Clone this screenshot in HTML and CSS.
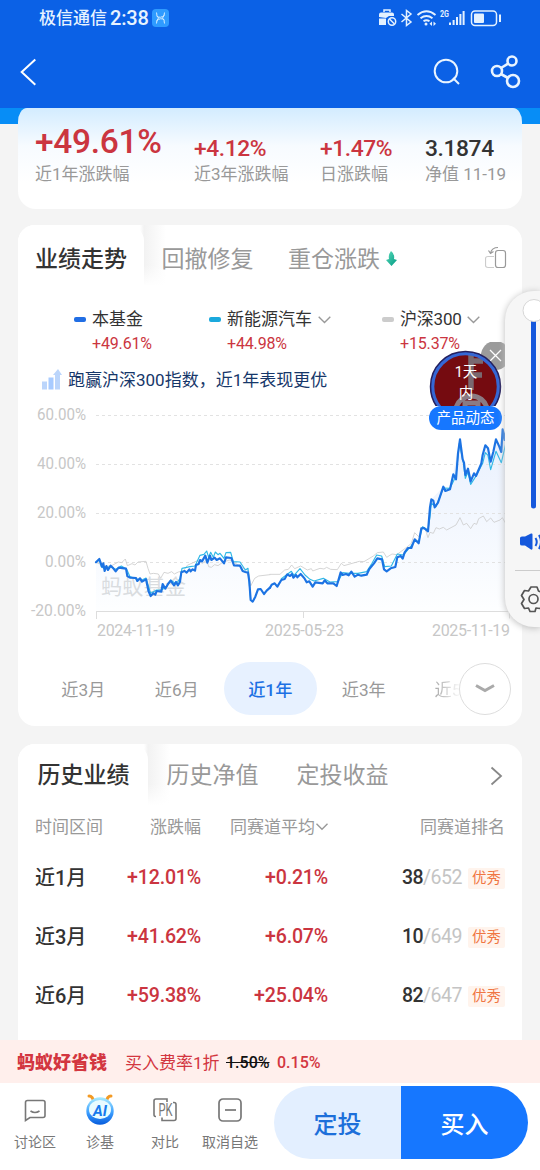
FILE: index.html
```html
<!DOCTYPE html>
<html lang="zh-CN">
<head>
<meta charset="utf-8">
<title>基金详情</title>
<link rel="stylesheet" href="styles.css">
</head>
<body>
<div class="screen">
  <header class="header">
    <div class="status">
      <div class="status-left"><span class="carrier">极信通信</span><span class="clock">2:38</span>
        <svg width="17" height="18" viewBox="0 0 17 18"><rect width="17" height="18" rx="4" fill="#2f9bff"/><path d="M4.5 3.500Q4.500 7 6.500 9Q4.500 11 4.500 14.500M12.500 3.500Q12.500 7 10.500 9Q12.500 11 12.500 14.500M4.500 7Q8.500 10 12.500 6M4.500 12Q8.500 8 12.500 11" fill="none" stroke="#d4edff" stroke-width="1"/></svg>
      </div>
      <svg class="status-icons" width="124" height="20" viewBox="378 8 124 20" fill="none" stroke="#e4f1ff" stroke-width="1.500">
        <path d="M379 17v-2.500q0-2 2-2h11q2 0 2 2V16h-5l-3 2zM379 18.500h7V25h-7z" fill="#e4f1ff" stroke="none"/><path d="M384 12v-2h6v2"/><circle cx="392" cy="21.500" r="3.700"/><path d="M389.500 19l5 5"/>
        <path d="M401.500 14l9.500 8-4.500 3.500v-15L411 14l-9.500 8"/>
        <path d="M417.500 15q9-7.500 18 0M420.500 18.300q6-4.500 12 0M423.500 21.300q3-2 6 0" stroke-width="1.900"/><circle cx="426" cy="24" r="1.500" fill="#e4f1ff" stroke="none"/><path d="M432 21.500l-2.500 2.300 2.500 2.300zM433.500 21.500l2.500 2.300-2.500 2.300z" fill="#e4f1ff" stroke="none"/>
        <text x="440" y="17" class="net" textLength="9" lengthAdjust="spacingAndGlyphs">2G</text>
        <path d="M450 25v-2.500M453.600 25v-5M457 25v-8M460.400 25v-11M463.600 25v-14" stroke-width="2"/>
        <rect x="471.500" y="11" width="25" height="14.500" rx="3.500"/><rect x="474" y="13.500" width="10" height="9.500" rx="1" fill="#e4f1ff" stroke="none"/><path d="M500 14.500v7.500" stroke-width="2"/>
      </svg>
    </div>
    <div class="navbar">
      <svg width="18" height="28" viewBox="20 58 18 28"><path d="M35.300 59.500L21.700 72l13.600 12.700" fill="none" stroke="#fff" stroke-width="2"/></svg>
      <svg width="90" height="36" viewBox="432 54 90 36" fill="none" stroke="#e9f4ff" stroke-width="2"><circle cx="446" cy="71" r="11.300"/><path d="M453 78l6 6"/><g stroke-width="2.600"><circle cx="512" cy="61" r="4.500"/><circle cx="497" cy="71" r="5"/><circle cx="513" cy="81" r="6"/><path d="M501 68l7.500-4.700M501 74l7 4"/></g></svg>
    </div>
  </header>

  <main class="content">
    <section class="summary">
      <div class="metric big"><b>+49.61%</b><span>近1年涨跌幅</span></div>
      <div class="metric"><b>+4.12%</b><span>近3年涨跌幅</span></div>
      <div class="metric"><b>+1.47%</b><span>日涨跌幅</span></div>
      <div class="metric dark"><b>3.1874</b><span>净值 11-19</span></div>
    </section>

    <section class="card trend">
      <div class="tabs">
        <div class="tab active">业绩走势</div><div class="tab">回撤修复</div><div class="tab">重仓涨跌
          <svg width="11" height="16" viewBox="0 0 11 16"><defs><linearGradient id="leaf" x2="1" y2="1"><stop stop-color="#5cdcbb"/><stop offset="1" stop-color="#009982"/></linearGradient></defs><path d="M5 0Q9 3 8 8l3 1-5.500 6L0 9l3-1Q2 4 5 0z" fill="url(#leaf)"/></svg></div>
        <svg class="rotate" width="23" height="24" viewBox="485 246 23 24" fill="none" stroke="#999" stroke-width="1.200"><rect x="495.500" y="250.500" width="10" height="17" rx="2.500"/><path d="M494 256.500h-6q-2.500 0-2.500 2v7q0 2 2.500 2h6" stroke="#ccc"/><path d="M498 247.500q-6 0-7.500 5.500M488.500 250.500l2 3 3-2"/></svg>
      </div>
      <div class="legend">
        <div class="item blue"><i></i><div><span>本基金</span><em>+49.61%</em></div></div>
        <div class="item cyan"><i></i><div><span>新能源汽车<svg width="13" height="8" viewBox="0 0 13 8"><path d="M.7.8l5.800 5.700L12.300.8"/></svg></span><em>+44.98%</em></div></div>
        <div class="item gray"><i></i><div><span><u>沪深300</u><svg width="13" height="8" viewBox="0 0 13 8"><path d="M.7.8l5.800 5.700L12.300.8"/></svg></span><em>+15.37%</em></div></div>
      </div>
      <div class="insight">
        <svg width="20" height="21" viewBox="0 0 20 21" fill="#bbd5fb"><rect y="12.500" width="5" height="8"/><rect x="6.500" y="8.500" width="5" height="12" fill="#a8cbff"/><path d="M13 20.500V6h-2l5-6 4 6h-2v14.500z"/></svg>
        <span>跑赢沪深300指数，近1年表现更优</span>
      </div>
      <svg class="chart" width="504" height="248" viewBox="18 397 504 248">
        <defs><linearGradient id="area" gradientUnits="userSpaceOnUse" x1="0" y1="80" x2="0" y2="634"><stop stop-color="#e2ecfd"/><stop offset="1" stop-color="#fdfeff"/></linearGradient></defs>
        <g transform="translate(20 400) scale(.33333)">
          <path fill="url(#area)" fill-opacity=".8" d="M228 634V487L238 477 254 510 272 497 287 514 318 506 330 533 378 538 392 588 424 575 452 542 480 545 494 513 525 512 540 480 556 467 612 490 634 474 642 496 684 518 698 605 722 567 732 582 794 537 842 522 878 560 950 558 962 517 1040 524 1072 475 1086 478 1100 514 1126 501 1174 444 1196 430 1224 394 1234 298 1270 260 1290 268 1320 118 1336 225 1352 244 1384 190 1396 136 1412 185 1428 118 1438 140 1448 88 1458 95V634z"/>
        </g>
        <text x="101" y="594" class="mark" textLength="85">蚂蚁基金</text>
        <g stroke="#e2e2e2" stroke-dasharray="3 3"><path d="M96 415.500h414M96 464.500h414M96 513.500h414M96 562.500h414M96 611.500h414"/></g>
        <path d="M96.500 619v-7.500H509.500v7M303.500 611v7" fill="none" stroke="#ddd"/>
        <g class="yaxis"><text x="37" y="420" textLength="49" lengthAdjust="spacingAndGlyphs">60.00%</text><text x="37" y="469" textLength="49" lengthAdjust="spacingAndGlyphs">40.00%</text><text x="37" y="518" textLength="49" lengthAdjust="spacingAndGlyphs">20.00%</text><text x="45" y="567" textLength="41" lengthAdjust="spacingAndGlyphs">0.00%</text><text x="31" y="616" textLength="55" lengthAdjust="spacingAndGlyphs">-20.00%</text></g>
        <g class="xaxis"><text x="97" y="636" textLength="78">2024-11-19</text><text x="265" y="636" textLength="79">2025-05-23</text><text x="432" y="636" textLength="78">2025-11-19</text></g>
        <g transform="translate(20 400) scale(.33333)" fill="none" stroke-linejoin="round" stroke-linecap="round">
          <g stroke="#ccc" stroke-width="2.500"><path d="M228 487L255 500 275 497 295 486 305 488 316 477 322 497 336 491 345 495 354 486 378 484 384 505 390 522 400 520 415 522 422 535 432 517 444 520 455 515 463 522 475 516 490 513 502 496 532 482 548 490 560 480 566 500 574 502 584 494 594 497 608 487 628 480 640 486 670 505 686 512 692 558 704 535 716 528 750 524"/>
          <path transform="translate(750 60)" d="M0 463L30 463 44 450 55 448 65 435 74 446 92 438 112 450 124 446 128 453 150 445 162 447 170 442 182 448 202 449 214 430 222 437 268 424 282 425 310 408 322 398 340 396 350 412 366 402 380 404 410 382 424 370 434 338 446 350 456 325 466 328 474 353 480 337 490 340 498 323 508 327 520 322 530 330 558 315 570 293 580 315 590 310 602 326 612 310 620 313 626 296 640 288 650 305 662 294 672 307 690 300 697 293 708 312"/></g>
          <g stroke="#31b9e6" stroke-width="3.500"><path d="M228 487L238 480 244 500 254 506 270 500 287 508 304 498 320 508 330 530 350 537 366 540 378 534 392 580 410 570 424 570 440 560 452 540 468 552 480 536 486 505 510 500 525 498 540 466 552 463 560 453 566 472 572 457 580 472 586 456 594 464 600 460 612 475 618 458 632 457 640 485 660 486 676 510 684 505 692 600"/>
          <path transform="translate(750 60)" d="M34 476L64 454 72 466 90 446 105 465 120 478 132 483 160 475 180 486 204 485 218 458 238 460 264 460 290 455 306 430 320 405 335 408 344 440 364 438 382 402 400 405 424 377 436 360 446 365 458 320 474 330 480 290 484 250 498 260 520 204 540 205 558 168 568 70 580 128 586 175 594 157 602 193 620 165 638 130 646 98 654 106 662 149 678 94 694 128 708 68"/></g>
          <g stroke="#1c73e3" stroke-width="6.500"><path d="M228 487L238 477 246 500 250 490 254 513 259 498 264 510 272 497 280 505 287 514 296 503 318 506 322 528 330 533 348 534 352 543 360 535 366 545 378 538 386 575 392 588 400 580 406 584 410 573 424 575 428 552 436 566 444 552 452 542 462 556 468 546 474 556 480 545 484 517 494 513 500 518 508 508 512 514 518 508 525 512 528 495 536 492 540 480 546 484 556 467 562 488 570 467 574 480 584 473 590 480 600 475 612 490 618 472 634 474 642 496 660 497 668 513 676 516 684 518 688 545 692 600 698 605 706 590 714 568 722 567 732 582 740 572 750 563"/>
          <path transform="translate(750 60)" d="M0 503L5 494 14 490 22 500 34 480 44 477 52 463 60 468 66 462 70 473 78 465 82 472 92 462 104 476 110 487 118 484 128 500 136 487 158 490 164 481 172 490 190 490 200 498 206 478 212 457 218 465 228 462 236 466 244 455 254 470 264 464 274 467 290 464 298 447 312 430 322 415 336 418 342 448 350 454 362 445 376 441 382 412 392 408 398 416 404 397 414 384 424 384 434 358 446 370 454 325 462 324 474 334 480 262 484 238 490 242 494 262 504 248 520 200 526 213 540 208 550 163 558 178 564 100 570 58 578 118 582 128 586 165 594 146 602 184 612 160 618 168 634 130 638 105 646 76 654 85 662 125 670 95 678 58 688 80 694 96 698 28 704 60 708 35"/></g>
        </g>
      </svg>
      <div class="ranges"><span>近3月</span><span>近6月</span><span class="on">近1年</span><span>近3年</span><span class="faded">近5年</span>
        <button class="more"><svg width="20" height="10" viewBox="0 0 20 10"><path d="M1 1.500L10 6.500l9-5" fill="none" stroke="#aaa" stroke-width="3"/></svg></button>
      </div>
      <div class="float">
        <svg width="80" height="64" viewBox="428 342 80 64"><circle cx="495.500" cy="355.500" r="14.500" fill="#9b9b9b"/><path d="M490 350l11 11M501 350l-11 11" stroke="#fff" stroke-width="1.300"/><circle cx="465.500" cy="386.500" r="34.500" fill="#750b10" stroke="#25205e" stroke-width="2.500"/><path d="M471 353v37M471 361h12M471 375h11" fill="none" stroke="#796970" stroke-width="5.500"/><path d="M456 408a16 16 0 0 1 31 0M465 408v-5h13v5" fill="none" stroke="#8b7b84" stroke-width="5"/><circle cx="465.500" cy="386.500" r="32.700" fill="none" stroke="#3567d5" stroke-width="3"/></svg>
        <span class="days">1天<br>内</span><span class="pill">产品动态</span>
      </div>
    </section>

    <section class="card history">
      <div class="tabs"><div class="tab active">历史业绩</div><div class="tab">历史净值</div><div class="tab">定投收益</div>
        <svg class="arrow" width="13" height="20" viewBox="0 0 13 20"><path d="M1.500 1.500l9.500 8.500-9.500 8.500" fill="none" stroke="#888" stroke-width="1.800"/></svg></div>
      <div class="row head"><span>时间区间</span><span>涨跌幅</span><span>同赛道平均<svg width="14" height="8" viewBox="0 0 14 8"><path d="M1.500.800L7 6.300 12.500.800" fill="none" stroke="#999" stroke-width="1.400"/></svg></span><span>同赛道排名</span></div>
      <div class="row"><span>近1月</span><b>+12.01%</b><b>+0.21%</b><span class="rank">38<small>/652</small><i>优秀</i></span></div>
      <div class="row"><span>近3月</span><b>+41.62%</b><b>+6.07%</b><span class="rank">10<small>/649</small><i>优秀</i></span></div>
      <div class="row"><span>近6月</span><b>+59.38%</b><b>+25.04%</b><span class="rank">82<small>/647</small><i>优秀</i></span></div>
    </section>
  </main>

  <footer class="footer">
    <div class="promo"><strong>蚂蚁好省钱</strong><span>买入费率1折</span><del>1.50%</del><b>0.15%</b></div>
    <div class="actions">
      <div class="action a1"><svg width="30" height="32" viewBox="0 0 30 32" fill="none" stroke="#777" stroke-width="1.600"><path d="M5.500 26.500V8.500q0-2 2-2h15.500q2 0 2 2v13q0 2-2 2H10z"/><path d="M10.500 17q4.500 3 9 0"/></svg><span>讨论区</span></div>
      <div class="action a2"><svg width="30" height="32" viewBox="0 0 30 32"><defs><linearGradient id="ai" x2="0" y2="1"><stop stop-color="#a8ecff"/><stop offset=".55" stop-color="#3d9fff"/><stop offset="1" stop-color="#075cdc"/></linearGradient></defs><path d="M4 2q4 0 5 7M26 2q-4 0-5 7" fill="none" stroke="#f39a24" stroke-width="3" stroke-linecap="round"/><circle cx="15" cy="17" r="13.700" fill="url(#ai)"/><ellipse cx="15" cy="15.500" rx="11" ry="9.500" fill="#e8fbff"/><text x="8" y="21.500" class="ai" textLength="14">AI</text></svg><span>诊基</span></div>
      <div class="action a3"><svg width="30" height="32" viewBox="0 0 30 32" fill="none" stroke="#777" stroke-width="1.600"><path d="M6 22.500H5.500q-1.500 0-1.500-2V7q0-2 2-2h11v3M12 23.500v3h12q2 0 2-2V10.500q0-2-2-2h-1"/><text x="8.500" y="22" class="pk" textLength="14" lengthAdjust="spacingAndGlyphs">PK</text></svg><span>对比</span></div>
      <div class="action a4"><svg width="30" height="32" viewBox="0 0 30 32" fill="none" stroke="#777" stroke-width="1.700"><rect x="4" y="5" width="22" height="22" rx="4"/><path d="M10 16h11"/></svg><span>取消自选</span></div>
      <div class="buttons"><button class="plan">定投</button><button class="buy">买入</button></div>
    </div>
  </footer>

  <div class="volume">
    <svg width="35" height="336" viewBox="505 291 35 336" fill="none"><path d="M533.500 315v191" stroke="#1558dc" stroke-width="5" stroke-linecap="round"/><circle cx="534" cy="310.500" r="11" fill="#fff" stroke="#d5d5d5"/><path d="M520 538q0-1.500 2-1.500h3l6-3q1.500-.5 1.500 1v14q0 1.500-1.500 1l-6-4h-3q-2 0-2-1.500z" fill="#1558dc"/><path d="M535.500 538q2.500 4 0 8M539 535q4 7 0 14" stroke="#1558dc" stroke-width="2"/><path d="M515 570.500h25" stroke="#ccc"/><g stroke="#555" stroke-width="1.700" stroke-linejoin="round"><path d="M531 587h6l1.500 4 4 1.500 3 5-2.500 3 1 4-4 4-4-.5-1 3.500h-5l-1.500-3.500-4 .5-3-5 2.500-4-2.500-4 3-5 4 .5z"/><circle cx="533.500" cy="599" r="4.500"/></g></svg>
  </div>
</div>
</body>
</html>
```
FILE: styles.css
```css
* { box-sizing: border-box; }
body { margin: 0; font-family: Roboto, "Noto Sans CJK SC", sans-serif; color: #333; }
svg { display: block; flex: none; }
button { border: 0; padding: 0; font: inherit; }
.screen { position: relative; width: 540px; height: 1170px; overflow: hidden; display: flex; flex-direction: column; background: #f4f4f4; }
.header { height: 108px; flex: none; background: #0b61e6; color: #e7f3ff; }
.status { height: 36px; padding: 0 38px 0 39px; display: flex; align-items: center; justify-content: space-between; }
.status-left { display: flex; align-items: center; gap: 3px; }
.carrier { font-size: 17px; line-height: 38px; font-weight: 500; }
.clock { font-size: 20px; line-height: 38px; font-weight: 500; letter-spacing: -.2px; }
.net { font-size: 9px; font-weight: 700; fill: #e4f1ff; stroke: none; }
.navbar { height: 72px; padding: 0 18px 0 20px; display: flex; align-items: center; justify-content: space-between; }
.content { height: 932px; flex: none; overflow: hidden; padding: 0 18px; display: flex; flex-direction: column; background: linear-gradient(#078df6 16px, #f4f4f4 16px); }
.summary { height: 101px; flex: none; border-radius: 9px 9px 18px 18px / 14px 14px 18px 18px; background: linear-gradient(#d3ecff, #f7fbff 38px, #fff 75px); padding: 12px 0 0 17px; display: grid; grid-template-columns: 159px 126px 105px auto; }
.metric { display: flex; flex-direction: column; color: #cb3540; }
.metric b { height: 42px; line-height: 58px; font-size: 22.800px; font-weight: 500; letter-spacing: -.4px; }
.metric.big b { font-size: 33.500px; line-height: 43px; letter-spacing: -.3px; }
.metric span { color: #999; font-size: 17px; line-height: 24px; white-space: nowrap; }
.metric.dark b { color: #333; }
.card { flex: none; border-radius: 17px; background: #fff; overflow: hidden; }
.trend { height: 501px; margin-top: 16px; position: relative; }
.history { height: 330px; margin-top: 18px; }
.tabs { display: flex; height: 61px; background: linear-gradient(transparent 40px, #fff 61px), linear-gradient(90deg, transparent 122px, #f2f2f2 126px, #fff 148px); }
.tab { font-size: 23px; line-height: 67px; color: #999; white-space: nowrap; display: flex; align-items: center; gap: 6px; margin-right: 34.500px; padding-top: 7px; }
.tab.active { color: #333; font-weight: 500; background: #fff; border-radius: 0 16px 0 0; width: 126px; padding-left: 17px; margin-right: 17.500px; }
.history .tabs { background: linear-gradient(transparent 40px, #fff 61px), linear-gradient(90deg, transparent 126px, #f2f2f2 130px, #fff 152px); }
.history .tab { padding-top: 2px; margin-right: 38px; }
.history .tab.active { width: 130px; padding-left: 19.500px; margin-right: 18.500px; }
.rotate { margin: 21px 14px 0 auto; }
.arrow { margin: 22px 19px 0 auto; }
.legend { height: 76px; display: flex; padding: 20px 0 0 56px; }
.item { display: flex; gap: 6px; width: 135px; }
.item.cyan { width: 173px; }
.item i { width: 12px; height: 4.500px; border-radius: 2px; margin-top: 11px; background: #216ee4; }
.item.cyan i { background: #1ba9dd; }
.item.gray i { background: #ccc; }
.item div { display: flex; flex-direction: column; }
.item span { font-size: 17px; line-height: 27px; display: flex; gap: 6px; align-items: center; white-space: nowrap; }
.item u { text-decoration: none; letter-spacing: -.2px; }
.item.gray span { gap: 5px; }
.item em { font-style: normal; font-size: 16px; line-height: 22px; color: #cb3540; letter-spacing: -.15px; }
.item path { fill: none; stroke: #999; stroke-width: 1.400; }
.insight { height: 35px; padding-left: 24px; display: flex; align-items: center; gap: 6px; font-size: 17px; line-height: 36px; color: #16376a; }
.yaxis, .xaxis { font-size: 16px; fill: #c7c7c7; }
.mark { font-size: 21px; fill: #d9dcdf; }
.ranges { height: 53px; margin-top: 17px; display: flex; align-items: center; position: relative; padding-left: 18.500px; }
.ranges span { width: 93.500px; height: 53px; line-height: 56px; text-align: center; font-size: 17.200px; color: #999; flex: none; }
.ranges .on { background: #e7f1ff; color: #1b70e4; border-radius: 27px; font-weight: 500; }
.ranges .faded { width: 47px; margin-left: 24px; text-align: left; white-space: nowrap; overflow: hidden; background: linear-gradient(90deg, #aaa, #fff 26px); background-clip: text; color: transparent; }
.more { position: absolute; right: 11px; top: 1px; width: 52px; height: 52px; border: 1.500px solid #ddd; border-radius: 50%; background: #fff; display: flex; align-items: center; justify-content: center; }
.float { position: absolute; left: 410px; top: 117px; width: 80px; height: 92px; color: #fff; text-align: center; }
.days { position: absolute; left: 18px; top: 20px; width: 40px; font-size: 14.500px; line-height: 21px; }
.pill { position: absolute; left: 1px; top: 64px; width: 73px; height: 24px; line-height: 25px; border-radius: 12px; background: #1677ff; font-size: 14.500px; }
.row { display: grid; grid-template-columns: 83px 83px 127px auto; height: 59px; line-height: 60px; padding: 0 17px; font-size: 20px; text-align: right; font-weight: 500; }
.row > :first-child { text-align: left; }
.row b { color: #cb3540; font-weight: 500; font-size: 19.600px; letter-spacing: -.2px; }
.row.head { height: 43px; line-height: 44px; font-size: 17px; color: #999; font-weight: 400; }
.row.head span { white-space: nowrap; display: flex; align-items: center; justify-content: flex-end; }
.row.head span:first-child { justify-content: flex-start; }
.row.head span:nth-child(3) { margin-right: -1px; }
.rank { display: flex; align-items: center; justify-content: flex-end; font-size: 19.500px; letter-spacing: -.5px; }
.rank small { font-size: 19.500px; color: #c4c4c4; font-weight: 400; }
.rank i { margin-left: 6px; width: 37px; height: 21px; line-height: 21px; font-style: normal; font-size: 14.500px; letter-spacing: 0; text-align: center; color: #f07643; background: #fff4ed; border-radius: 2px; font-weight: 400; }
.footer { height: 130px; flex: none; background: #fff; }
.promo { height: 43px; line-height: 46px; background: #ffefec; padding-left: 17px; display: flex; font-size: 17px; color: #d33640; white-space: nowrap; }
.promo strong { font-size: 18px; font-weight: 900; width: 108px; }
.promo span { width: 101px; }
.promo del { width: 51px; color: #111; font-weight: 500; font-size: 16px; }
.promo b { font-weight: 500; font-size: 16px; }
.actions { height: 87px; display: flex; position: relative; }
.action { display: flex; flex-direction: column; align-items: center; padding-top: 11px; width: 65px; color: #777; font-size: 14px; }
.action span { line-height: 32px; white-space: nowrap; }
.a1 { width: 70px; }
.a2 { width: 60px; }
.a3 { width: 70px; }
.a4 { width: 60px; }
.ai { font-size: 15px; font-weight: 700; font-style: italic; fill: #1679ed; }
.pk { font-size: 18px; fill: #777; stroke: none; }
.buttons { margin: 3px 0 0 14px; height: 73px; width: 254px; display: flex; border-radius: 37px; overflow: hidden; font-size: 24px; font-weight: 500; }
.buttons button { width: 127px; line-height: 78px; }
.plan { background: #e3efff; color: #1d6fda; }
.buy { background: #1677ff; color: #fff; }
.volume { position: absolute; right: 0; top: 291px; width: 35px; height: 336px; background: #f6f6f6; border-radius: 29px 0 0 29px; box-shadow: 0 1px 7px #bbb; overflow: hidden; }
```
